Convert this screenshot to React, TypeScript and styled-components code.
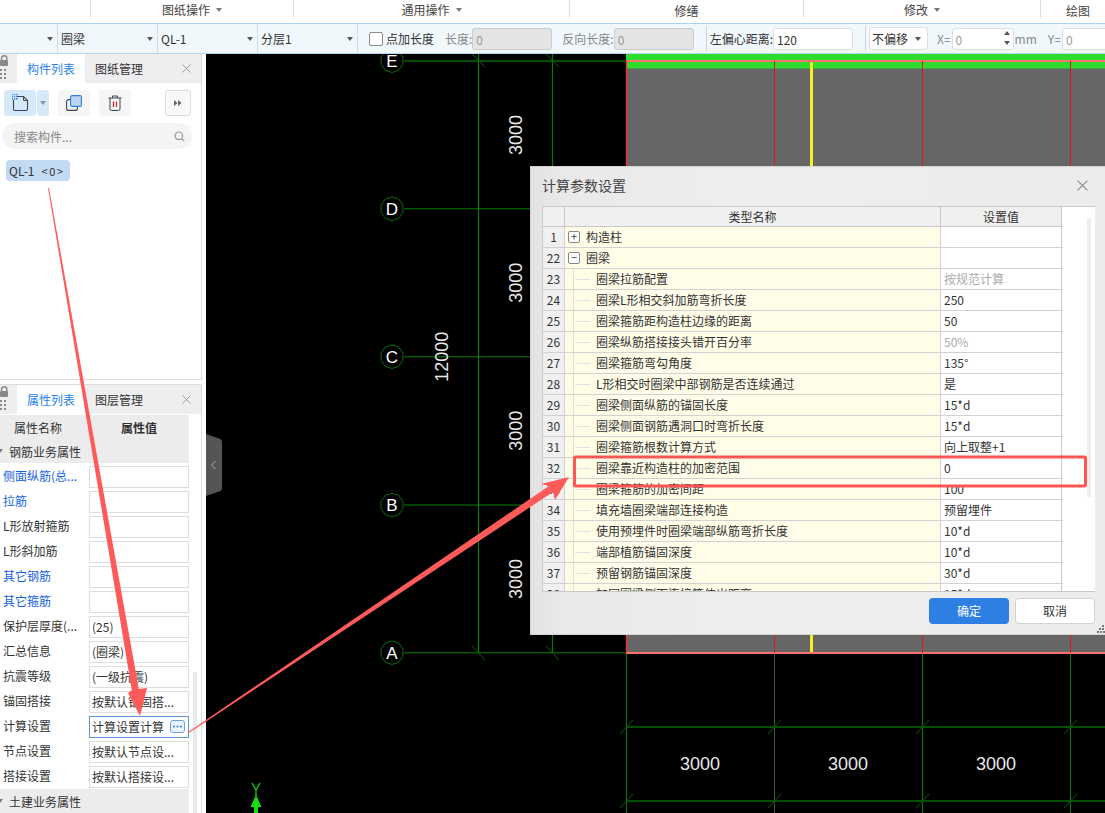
import { FunctionComponent } from "react";
import styled, { createGlobalStyle } from "styled-components";

const GlobalStyle = createGlobalStyle`
  html, body {
    margin: 0;
    padding: 0;
    background: #fff;
  }
  * {
    box-sizing: border-box;
  }
`;

const Page = styled.div`
  position: relative;
  width: 1105px;
  height: 813px;
  overflow: hidden;
  display: flex;
  flex-direction: column;
  font-family: "Noto Sans CJK SC", "Noto Sans", sans-serif;
  font-size: 12px;
  color: #333;
  background: #fff;
`;

/* ribbon captions */
const Ribbon = styled.div`
  height: 23px;
  flex: none;
  display: flex;
  background: #fff;
`;
const RibbonGroup = styled.div<{ $w: number; $low?: boolean }>`
  flex: none;
  width: ${(p) => p.$w}px;
  height: 18px;
  padding-top: ${(p) => (p.$low ? 3 : 1)}px;
  display: flex;
  align-items: center;
  justify-content: center;
  gap: 6px;
  border-right: 1px solid #ddd;
  color: #444;
  line-height: 18px;
`;
const Caret = styled.span<{ $c?: string }>`
  width: 0;
  height: 0;
  flex: none;
  border-left: 3.5px solid transparent;
  border-right: 3.5px solid transparent;
  border-top: 4px solid ${(p) => p.$c || "#777"};
`;

/* property toolbar */
const Toolbar = styled.div`
  height: 31px;
  flex: none;
  display: flex;
  align-items: center;
  background: #f1f8fc;
  border-top: 1px solid #a9d2f3;
  border-bottom: 1px solid #b4d6f0;
  white-space: nowrap;
`;
const ToolCell = styled.div<{ $w: number }>`
  flex: none;
  width: ${(p) => p.$w}px;
  height: 100%;
  display: flex;
  align-items: center;
  justify-content: space-between;
  padding: 0 4px 0 3px;
  border-right: 1px solid #cfdde6;
`;
const CheckBox = styled.span`
  flex: none;
  width: 14px;
  height: 14px;
  margin-left: 11px;
  margin-right: 3px;
  border: 1px solid #8a8a8a;
  border-radius: 2px;
  background: #fff;
`;
const ToolLabel = styled.span<{ $gap?: number; $muted?: boolean }>`
  flex: none;
  margin-left: ${(p) => p.$gap || 0}px;
  color: ${(p) => (p.$muted ? "#888" : "#333")};
`;
const ToolInput = styled.div<{ $w: number; $off?: boolean; $gap?: number }>`
  flex: none;
  position: relative;
  width: ${(p) => p.$w}px;
  height: 22px;
  margin-left: ${(p) => p.$gap || 0}px;
  padding-left: 3px;
  line-height: 21px;
  border: 1px solid ${(p) => (p.$off ? "#c9ccd0" : "#dcdfe3")};
  border-radius: 3px;
  background: ${(p) => (p.$off ? "#e4e4e4" : "#fff")};
  color: ${(p) => (p.$off ? "#999" : "#333")};
`;
const GhostValue = styled.span`
  color: #999;
`;
const ToolDivider = styled.span<{ $gap: number }>`
  flex: none;
  width: 1px;
  height: 25px;
  margin-left: ${(p) => p.$gap}px;
  background: #cfd4d8;
`;
const ToolSelect = styled.div`
  flex: none;
  width: 59px;
  height: 23px;
  margin-left: 3px;
  padding: 0 6px 0 2px;
  display: flex;
  align-items: center;
  justify-content: space-between;
  border: 1px solid #dcdfe3;
  border-radius: 3px;
  background: #fff;
`;
const Spinner = styled.span`
  position: absolute;
  right: 3px;
  top: 2px;
  display: flex;
  flex-direction: column;
  gap: 6px;
`;
const SpinUp = styled.span`
  width: 0;
  height: 0;
  border-left: 3px solid transparent;
  border-right: 3px solid transparent;
  border-bottom: 4px solid #555;
`;
const SpinDown = styled.span`
  width: 0;
  height: 0;
  border-left: 3px solid transparent;
  border-right: 3px solid transparent;
  border-top: 4px solid #555;
`;

/* work area */
const Workspace = styled.div`
  flex: 1;
  min-height: 0;
  display: flex;
`;
const Sidebar = styled.div`
  flex: none;
  width: 206px;
  display: flex;
  flex-direction: column;
  background: #fff;
`;
const ListPanel = styled.div`
  flex: none;
  width: 202px;
  height: 326px;
  border-right: 1px solid #ddd;
  border-bottom: 1px solid #ddd;
`;
const PropPanel = styled.div`
  flex: none;
  width: 202px;
  height: 429px;
  margin-top: 4px;
  position: relative;
  border-right: 1px solid #ddd;
  border-top: 1px solid #ddd;
  overflow: hidden;
`;
const TabBar = styled.div`
  height: 29px;
  display: flex;
  align-items: center;
  background: #eeeef0;
`;
const Grip = styled.div`
  flex: none;
  width: 17px;
  height: 100%;
  display: flex;
  align-items: flex-start;
`;
const Tab = styled.div<{ $on?: boolean }>`
  flex: none;
  width: 68px;
  height: 100%;
  display: flex;
  align-items: center;
  justify-content: center;
  background: ${(p) => (p.$on ? "#fff" : "transparent")};
  color: ${(p) => (p.$on ? "#2a7fe6" : "#333")};
`;
const TabClose = styled.div`
  margin-left: auto;
  width: 28px;
  display: flex;
  justify-content: center;
  padding-right: 2px;
`;
const IconRow = styled.div`
  display: flex;
  align-items: center;
  padding: 7px 0 0 4px;
  height: 33px;
`;
const IconButton = styled.div<{ $bg?: string; $w?: number; $gap?: number }>`
  flex: none;
  width: ${(p) => p.$w || 32}px;
  height: 26px;
  margin-left: ${(p) => p.$gap || 0}px;
  display: flex;
  align-items: center;
  justify-content: center;
  border-radius: 3px;
  background: ${(p) => p.$bg || "#f5f5f5"};
`;
const MoreButton = styled.div`
  flex: none;
  width: 26px;
  height: 26px;
  margin-left: 34px;
  display: flex;
  align-items: center;
  justify-content: center;
  border: 1px solid #ddd;
  border-radius: 3px;
  background: #f8f8f8;
`;
const SearchBox = styled.div`
  width: 190px;
  height: 26px;
  margin: 7px 0 0 2px;
  padding: 0 7px 0 12px;
  display: flex;
  align-items: center;
  justify-content: space-between;
  border-radius: 13px;
  background: #f4f4f4;
  color: #888;
`;
const ListChip = styled.div`
  width: 64px;
  height: 21px;
  margin: 11px 0 0 6px;
  padding-left: 3px;
  display: flex;
  align-items: center;
  gap: 7px;
  border-radius: 4px;
  background: #c2daf2;
  color: #333;
`;
const ChipCount = styled.span`
  letter-spacing: 1.6px;
  font-size: 11px;
`;
const PropHead = styled.div`
  width: 189px;
  height: 24px;
  margin-top: 1px;
  display: flex;
  align-items: center;
  background: #ececec;
`;
const PropHeadCell = styled.div<{ $w: number; $bold?: boolean }>`
  flex: none;
  width: ${(p) => p.$w}px;
  padding-right: ${(p) => (p.$bold ? 0 : 12)}px;
  text-align: center;
  font-weight: ${(p) => (p.$bold ? 700 : 400)};
  border-left: ${(p) => (p.$bold ? "1px solid #ddd" : "none")};
`;
const GroupRow = styled.div`
  width: 189px;
  height: 24px;
  display: flex;
  align-items: center;
  padding-left: 9px;
  position: relative;
  background: #ececec;
`;
const GroupMark = styled.span`
  position: absolute;
  left: -3px;
  top: 10px;
  width: 0;
  height: 0;
  border-left: 3px solid transparent;
  border-right: 3px solid transparent;
  border-top: 4px solid #777;
`;
const PropList = styled.div`
  padding-top: 1px;
`;
const PropRow = styled.div`
  width: 189px;
  height: 25px;
  display: flex;
  align-items: center;
  justify-content: space-between;
`;
const PropName = styled.div<{ $link?: boolean }>`
  padding: 0 0 2px 3px;
  white-space: nowrap;
  color: ${(p) => (p.$link ? "#1463e0" : "#333")};
`;
const PropValue = styled.div<{ $active?: boolean }>`
  flex: none;
  width: 100px;
  height: 22px;
  padding: 0 2px 1px;
  display: flex;
  align-items: center;
  justify-content: space-between;
  white-space: nowrap;
  border: 1px solid ${(p) => (p.$active ? "#5c94dc" : "#ddd")};
  background: #fff;
`;
const DotsButton = styled.span`
  flex: none;
  width: 15px;
  height: 13px;
  margin-right: 1px;
  display: flex;
  align-items: center;
  justify-content: center;
  border: 1px solid #6aa4e8;
  border-radius: 3px;
  background: #eaf3fd;
`;
const PropScroll = styled.div`
  position: absolute;
  left: 193px;
  top: 287px;
  width: 4px;
  height: 150px;
  background: #e8e8e8;
`;
const Canvas = styled.div`
  flex: 1;
  position: relative;
  background: #000;
  overflow: hidden;
`;
const Drawing = styled.svg`
  display: block;
  width: 899px;
  height: 759px;
`;
const Collapse = styled.svg`
  position: absolute;
  left: 0;
  top: 380px;
`;

/* settings dialog */
const Dialog = styled.div`
  position: absolute;
  left: 530px;
  top: 166px;
  width: 590px;
  height: 469px;
  display: flex;
  flex-direction: column;
  border: 1px solid #d4d4d4;
  background: linear-gradient(90deg, #e2e2e2 0, #e9e9e9 30px, #eeeeee 200px, #ececec 100%);
`;
const DialogTitle = styled.div`
  flex: none;
  height: 39px;
  padding: 0 31px 3px 11px;
  display: flex;
  align-items: center;
  justify-content: space-between;
  font-size: 14px;
  color: #444;
`;
const TableWrap = styled.div`
  flex: none;
  position: relative;
  width: 553px;
  height: 386px;
  margin-left: 11px;
  overflow: hidden;
  border: 1px solid #c8c8c8;
  border-right: none;
  background: #fff;
`;
const Row = styled.div`
  display: grid;
  grid-template-columns: 22px 376px 121px;
  width: 520px;
  height: 21px;
  line-height: 20px;
  border-bottom: 1px solid #d2d2d2;
`;
const HeadRow = styled(Row)`
  height: 20px;
  line-height: 19px;
  border-bottom: 1px solid #c8c8c8;
`;
const NumCell = styled.div`
  text-align: center;
  background: #f0f0f0;
  color: #333;
  border-right: 1px solid #d2d2d2;
`;
const HeadCell = styled.div`
  text-align: center;
  background: #f0f0f0;
  color: #333;
  border-right: 1px solid #c8c8c8;
`;
const NameCell = styled.div<{ $depth: number }>`
  position: relative;
  padding-left: ${(p) => (p.$depth ? 31 : 21)}px;
  background: #fffde8;
  border-right: 1px solid #d2d2d2;
  white-space: nowrap;
  overflow: hidden;
`;
const ValueCell = styled.div<{ $muted?: boolean }>`
  padding-left: 3px;
  background: #fff;
  color: ${(p) => (p.$muted ? "#aaa" : "#333")};
  border-right: 1px solid #c8c8c8;
  white-space: nowrap;
  overflow: hidden;
`;
const TreeLines = styled.span`
  position: absolute;
  left: 8px;
  top: 0;
  bottom: -1px;
  width: 16px;
  border-left: 1px solid #e0e0d0;
  &::after {
    content: "";
    position: absolute;
    left: 1px;
    top: 10px;
    width: 15px;
    height: 1px;
    background: #e2e2e2;
  }
`;
const Expander = styled.span`
  position: absolute;
  left: 3px;
  top: 4px;
  width: 12px;
  height: 12px;
  border: 1px solid #888;
  border-radius: 2px;
  background: #fff;
  color: #444;
  font-size: 11px;
  line-height: 9px;
  text-align: center;
`;
const TableScroll = styled.div`
  position: absolute;
  left: 544px;
  top: 11px;
  width: 4px;
  height: 279px;
  background: #eeeeee;
`;
const DialogFooter = styled.div`
  flex: none;
  height: 26px;
  margin-top: 6px;
  margin-left: 398px;
  display: flex;
  gap: 6px;
`;
const PrimaryButton = styled.div`
  width: 80px;
  height: 26px;
  line-height: 26px;
  text-align: center;
  border-radius: 4px;
  background: #2d7fe3;
  color: #fff;
`;
const SecondaryButton = styled.div`
  width: 80px;
  height: 26px;
  line-height: 24px;
  text-align: center;
  border: 1px solid #d2d2d2;
  border-radius: 4px;
  background: #fff;
  color: #333;
`;
const ResizeGrip = styled.svg`
  position: absolute;
  left: 566px;
  top: 458px;
`;
const Annotations = styled.svg`
  position: absolute;
  left: 0;
  top: 0;
  pointer-events: none;
`;

type ParamRow = { no: number; name: string; value?: string; muted?: boolean; mark?: string };

const paramRows: ParamRow[] = [
  { no: 1, name: "构造柱", mark: "+" },
  { no: 22, name: "圈梁", mark: "−" },
  { no: 23, name: "圈梁拉筋配置", value: "按规范计算", muted: true },
  { no: 24, name: "圈梁L形相交斜加筋弯折长度", value: "250" },
  { no: 25, name: "圈梁箍筋距构造柱边缘的距离", value: "50" },
  { no: 26, name: "圈梁纵筋搭接接头错开百分率", value: "50%", muted: true },
  { no: 27, name: "圈梁箍筋弯勾角度", value: "135°" },
  { no: 28, name: "L形相交时圈梁中部钢筋是否连续通过", value: "是" },
  { no: 29, name: "圈梁侧面纵筋的锚固长度", value: "15*d" },
  { no: 30, name: "圈梁侧面钢筋遇洞口时弯折长度", value: "15*d" },
  { no: 31, name: "圈梁箍筋根数计算方式", value: "向上取整+1" },
  { no: 32, name: "圈梁靠近构造柱的加密范围", value: "0" },
  { no: 33, name: "圈梁箍筋的加密间距", value: "100" },
  { no: 34, name: "填充墙圈梁端部连接构造", value: "预留埋件" },
  { no: 35, name: "使用预埋件时圈梁端部纵筋弯折长度", value: "10*d" },
  { no: 36, name: "端部植筋锚固深度", value: "10*d" },
  { no: 37, name: "预留钢筋锚固深度", value: "30*d" },
  { no: 38, name: "加固圈梁侧面连接筋伸出距离", value: "15*d" },
];

type PropItem = { name: string; value?: string; link?: boolean };

const propItems: PropItem[] = [
  { name: "侧面纵筋(总...", link: true },
  { name: "拉筋", link: true },
  { name: "L形放射箍筋" },
  { name: "L形斜加筋" },
  { name: "其它钢筋", link: true },
  { name: "其它箍筋", link: true },
  { name: "保护层厚度(...", value: "(25)" },
  { name: "汇总信息", value: "(圈梁)" },
  { name: "抗震等级", value: "(一级抗震)" },
  { name: "锚固搭接", value: "按默认锚固搭..." },
  { name: "计算设置", value: "计算设置计算" },
  { name: "节点设置", value: "按默认节点设..." },
  { name: "搭接设置", value: "按默认搭接设..." },
];

const LockGrip: FunctionComponent = () => (
  <Grip>
    <svg width="9" height="29" viewBox="0 0 9 29">
      <path d="M1.5 6V4.5a2.7 2.7 0 0 1 5.4 0V6" fill="none" stroke="#888" strokeWidth="1.4" />
      <rect x="0" y="6" width="8" height="6" rx="1" fill="#888" />
      {[15, 19, 23].map((y) => (
        <g key={y} fill="#888">
          <rect x="0" y={y} width="2" height="2" />
          <rect x="4" y={y} width="2" height="2" />
        </g>
      ))}
    </svg>
  </Grip>
);

const CloseMark: FunctionComponent<{ size: number; color: string }> = ({ size, color }) => (
  <svg width={size} height={size} viewBox="0 0 10 10">
    <path d="M0.5 0.5L9.5 9.5M9.5 0.5L0.5 9.5" stroke={color} strokeWidth="1" fill="none" />
  </svg>
);

const AxisBubble: FunctionComponent<{ y: number; label: string }> = ({ y, label }) => {
  const pts = Array.from({ length: 10 }, (_, i) => {
    const a = (Math.PI * 2 * i) / 10 + Math.PI / 2;
    return `${392 + 11.5 * Math.cos(a)},${y + 11.8 * Math.sin(a)}`;
  }).join(" ");
  return (
    <g>
      <polygon points={pts} fill="#000" stroke="#0a6e0a" strokeWidth="1" />
      <text x={392} y={y + 6} textAnchor="middle" fontSize="17" fill="#fff" fontFamily="Liberation Sans, sans-serif">
        {label}
      </text>
    </g>
  );
};

const DimText: FunctionComponent<{ x: number; y: number; label: string; up?: boolean }> = ({ x, y, label, up }) => (
  <text
    x={x}
    y={y}
    textAnchor="middle"
    dominantBaseline="central"
    fontSize="18"
    fill="#e8e8e8"
    fontFamily="Liberation Sans, sans-serif"
    transform={up ? `rotate(-90 ${x} ${y})` : undefined}
  >
    {label}
  </text>
);

const App: FunctionComponent = () => {
  return (
    <Page>
      <GlobalStyle />
      <Ribbon>
        <RibbonGroup $w={91} />
        <RibbonGroup $w={203}>
          图纸操作 <Caret />
        </RibbonGroup>
        <RibbonGroup $w={276}>
          通用操作 <Caret />
        </RibbonGroup>
        <RibbonGroup $w={234} $low>
          修缮
        </RibbonGroup>
        <RibbonGroup $w={237}>
          修改 <Caret />
        </RibbonGroup>
        <RibbonGroup $w={75} $low>
          绘图
        </RibbonGroup>
      </Ribbon>
      <Toolbar>
        <ToolCell $w={58}>
          <span />
          <Caret $c="#555" />
        </ToolCell>
        <ToolCell $w={100}>
          圈梁
          <Caret $c="#555" />
        </ToolCell>
        <ToolCell $w={100}>
          QL-1
          <Caret $c="#555" />
        </ToolCell>
        <ToolCell $w={100}>
          分层1
          <Caret $c="#555" />
        </ToolCell>
        <CheckBox />
        <ToolLabel>点加长度</ToolLabel>
        <ToolLabel $gap={11} $muted>
          长度:
        </ToolLabel>
        <ToolInput $w={80} $off>
          0
        </ToolInput>
        <ToolLabel $gap={10} $muted>
          反向长度:
        </ToolLabel>
        <ToolInput $w={80} $off>
          0
        </ToolInput>
        <ToolDivider $gap={12} />
        <ToolLabel $gap={3}>左偏心距离:</ToolLabel>
        <ToolInput $w={80}>120</ToolInput>
        <ToolDivider $gap={12} />
        <ToolSelect>
          不偏移
          <Caret $c="#555" />
        </ToolSelect>
        <ToolLabel $gap={9} $muted>
          X=
        </ToolLabel>
        <ToolInput $w={62} $gap={1}>
          <GhostValue>0</GhostValue>
          <Spinner>
            <SpinUp />
            <SpinDown />
          </Spinner>
        </ToolInput>
        <ToolLabel $gap={1} $muted>
          mm
        </ToolLabel>
        <ToolLabel $gap={11} $muted>
          Y=
        </ToolLabel>
        <ToolInput $w={80} $gap={1}>
          <GhostValue>0</GhostValue>
        </ToolInput>
      </Toolbar>
      <Workspace>
        <Sidebar>
          <ListPanel>
            <TabBar>
              <LockGrip />
              <Tab $on>构件列表</Tab>
              <Tab>图纸管理</Tab>
              <TabClose>
                <CloseMark size={9} color="#999" />
              </TabClose>
            </TabBar>
            <IconRow>
              <IconButton $bg="#d6e9fb">
                <svg width="17" height="18" viewBox="0 0 17 18">
                  <path d="M4.5 2.5H11.5L15.5 6.5V15a1.5 1.5 0 0 1-1.5 1.5H3A1.5 1.5 0 0 1 1.5 15V6" fill="none" stroke="#3a4656" strokeWidth="1.1" />
                  <path d="M11.5 2.5V6.5H15.5" fill="none" stroke="#3a4656" strokeWidth="1" />
                  <rect x="0" y="0" width="5.5" height="5.5" fill="#3f86e8" />
                  <path d="M1.5 0V5.5M3.5 0V5.5M0 1.5H5.5M0 3.5H5.5" stroke="#d6e9fb" strokeWidth="0.8" />
                </svg>
              </IconButton>
              <IconButton $bg="#d6e9fb" $w={12} $gap={1}>
                <Caret $c="#8a96a2" />
              </IconButton>
              <IconButton $gap={9}>
                <svg width="16" height="16" viewBox="0 0 16 16">
                  <rect x="0.6" y="4.6" width="10.8" height="10.8" rx="2" fill="none" stroke="#3a4656" strokeWidth="1.1" />
                  <rect x="4.6" y="0.6" width="10.8" height="10.8" rx="1.5" fill="#bcd4f2" stroke="#2f7fe6" strokeWidth="1.1" />
                </svg>
              </IconButton>
              <IconButton $gap={9}>
                <svg width="14" height="16" viewBox="0 0 14 16">
                  <path d="M0.5 3H13.5M4.5 3V1H9.5V3" fill="none" stroke="#3a4656" strokeWidth="1" />
                  <path d="M2 3V14a1.5 1.5 0 0 0 1.5 1.5H10.5A1.5 1.5 0 0 0 12 14V3" fill="none" stroke="#3a4656" strokeWidth="1" />
                  <path d="M5.5 6.5V12M8.5 6.5V12" stroke="#e02020" strokeWidth="1.2" />
                </svg>
              </IconButton>
              <MoreButton>
                <svg width="8" height="6" viewBox="0 0 8 6">
                  <path d="M0 0L3.5 3L0 6ZM4 0L7.5 3L4 6Z" fill="#666" />
                </svg>
              </MoreButton>
            </IconRow>
            <SearchBox>
              搜索构件...
              <svg width="11" height="11" viewBox="0 0 11 11">
                <circle cx="4.8" cy="4.8" r="3.8" fill="none" stroke="#999" strokeWidth="1.2" />
                <path d="M7.6 7.6L10.2 10.2" stroke="#999" strokeWidth="1.2" />
              </svg>
            </SearchBox>
            <ListChip>
              QL-1
              <ChipCount>&lt;0&gt;</ChipCount>
            </ListChip>
          </ListPanel>
          <PropPanel>
            <TabBar>
              <LockGrip />
              <Tab $on>属性列表</Tab>
              <Tab>图层管理</Tab>
              <TabClose>
                <CloseMark size={9} color="#999" />
              </TabClose>
            </TabBar>
            <PropHead>
              <PropHeadCell $w={88}>属性名称</PropHeadCell>
              <PropHeadCell $w={101} $bold>
                属性值
              </PropHeadCell>
            </PropHead>
            <GroupRow>
              <GroupMark />
              钢筋业务属性
            </GroupRow>
            <PropList>
              {propItems.map((item) => (
                <PropRow key={item.name}>
                  <PropName $link={item.link}>{item.name}</PropName>
                  <PropValue $active={item.name === "计算设置"}>
                    {item.value}
                    {item.name === "计算设置" && (
                      <DotsButton>
                        <svg width="9" height="3" viewBox="0 0 9 3">
                          <circle cx="1" cy="1.5" r="1" fill="#2a7fe6" />
                          <circle cx="4.5" cy="1.5" r="1" fill="#2a7fe6" />
                          <circle cx="8" cy="1.5" r="1" fill="#2a7fe6" />
                        </svg>
                      </DotsButton>
                    )}
                  </PropValue>
                </PropRow>
              ))}
            </PropList>
            <GroupRow>
              <GroupMark />
              土建业务属性
            </GroupRow>
            <PropScroll />
          </PropPanel>
        </Sidebar>
        <Canvas>
          <Drawing viewBox="206 54 899 759">
            <rect x="626" y="54" width="479" height="599" fill="#666" />
            <rect x="626" y="54" width="479" height="14.5" fill="#2edc2e" />
            <rect x="404" y="60" width="222" height="2" fill="#004d00" />
            <path d="M404 208.7H626M404 356.7H626M404 505H626M404 652.7H626" stroke="#055505" strokeWidth="1.6" />
            <path d="M478.5 54V653M552.5 54V653" stroke="#0a7a0a" strokeWidth="1.2" />
            <path d="M472 54L485 67M546 54L559 67M472 646L485 660M546 646L559 660" stroke="#0a5f0a" strokeWidth="1" />
            <rect x="626" y="60" width="479" height="2" fill="#ff7070" />
            <rect x="626" y="652" width="479" height="2" fill="#ff7070" />
            <path d="M626.5 60V653" stroke="#ff3030" strokeWidth="1.4" />
            <path d="M774.5 61V653M922.5 61V653M1070.5 61V653" stroke="#e01818" strokeWidth="1" />
            <rect x="810" y="62" width="3" height="590" fill="#f5f020" />
            <path d="M626.5 654V813M922.5 654V813M1070.5 654V813" stroke="#0a7a0a" strokeWidth="1" />
            <path d="M774.5 654V813" stroke="#3a5a3a" strokeWidth="1" />
            <path d="M626 727H1105M626 801H1105" stroke="#024f02" strokeWidth="1.8" />
            <path d="M620 734L633 720M768 734L781 720M916 734L929 720M1064 734L1077 720M620 808L633 794M768 808L781 794M916 808L929 794M1064 808L1077 794" stroke="#0a5f0a" strokeWidth="1" />
            <AxisBubble y={60.7} label="E" />
            <AxisBubble y={208.7} label="D" />
            <AxisBubble y={356.7} label="C" />
            <AxisBubble y={505} label="B" />
            <AxisBubble y={652.7} label="A" />
            <DimText x={515.7} y={135} label="3000" up />
            <DimText x={515.7} y={282.7} label="3000" up />
            <DimText x={515.7} y={430.7} label="3000" up />
            <DimText x={515.7} y={579} label="3000" up />
            <DimText x={441.7} y={356.7} label="12000" up />
            <DimText x={700} y={764} label="3000" />
            <DimText x={848} y={764} label="3000" />
            <DimText x={996} y={764} label="3000" />
            <path d="M256 813V804" stroke="#10e010" strokeWidth="4" />
            <path d="M256 795L261.5 807H250.5Z" fill="#10e010" />
            <path d="M252 783L256 790L260 783M256 790V796" fill="none" stroke="#10e010" strokeWidth="1.2" />
          </Drawing>
          <Collapse width="16" height="62" viewBox="0 0 16 62">
            <path d="M0 0L13 4.5Q16 5.5 16 8V54Q16 56.5 13 57.5L0 62Z" fill="#555" />
            <path d="M9.5 27L5.5 31L9.5 35" fill="none" stroke="#aaa" strokeWidth="1" />
          </Collapse>
        </Canvas>
      </Workspace>
      <Dialog>
        <DialogTitle>
          计算参数设置
          <CloseMark size={11} color="#888" />
        </DialogTitle>
        <TableWrap>
          <HeadRow>
            <HeadCell />
            <HeadCell>类型名称</HeadCell>
            <HeadCell>设置值</HeadCell>
          </HeadRow>
          {paramRows.map((row) => (
            <Row key={row.no}>
              <NumCell>{row.no}</NumCell>
              <NameCell $depth={row.mark ? 0 : 1}>
                {row.mark ? <Expander>{row.mark}</Expander> : <TreeLines />}
                {row.name}
              </NameCell>
              <ValueCell $muted={row.muted}>{row.value}</ValueCell>
            </Row>
          ))}
          <TableScroll />
        </TableWrap>
        <DialogFooter>
          <PrimaryButton>确定</PrimaryButton>
          <SecondaryButton>取消</SecondaryButton>
        </DialogFooter>
        <ResizeGrip width="8" height="8" viewBox="0 0 8 8">
          <path d="M5 0h2v2H5zM2 3h2v2H2zM5 3h2v2H5zM0 6h2v2H0zM3 6h2v2H3zM6 6h2v2H6z" fill="#777" />
        </ResizeGrip>
      </Dialog>
      <Annotations width="1105" height="813" viewBox="0 0 1105 813">
        <path d="M48 188L49 188L138.8 689L147 688L140 716L128 693L131.8 690Z" fill="#ff5a5a" />
        <path d="M188 733.5L187.5 732.5L549 486L541 484L569 477L555 500L553 492Z" fill="#ff5a5a" />
        <rect x="574.5" y="457" width="511" height="29" rx="1" fill="none" stroke="#ff5555" strokeWidth="3" />
      </Annotations>
    </Page>
  );
};

export default App;
